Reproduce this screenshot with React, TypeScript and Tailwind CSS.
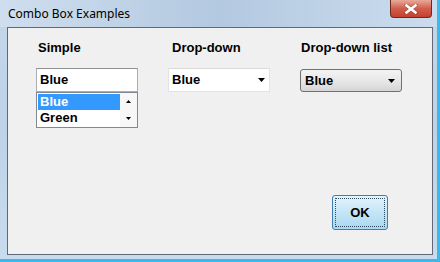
import React from "react";

const dlgFont = { fontFamily: '"Liberation Sans", Arial, sans-serif' };

function Arrow({ up = false, size = 7 }: { up?: boolean; size?: number }) {
  const h = Math.ceil(size / 2);
  return (
    <svg width={size} height={h} viewBox={`0 0 ${size} ${h}`}>
      {up ? (
        <polygon points={`0,${h} ${size},${h} ${size / 2},0`} fill="#000" />
      ) : (
        <polygon points={`0,0 ${size},0 ${size / 2},${h}`} fill="#000" />
      )}
    </svg>
  );
}

export default function App() {
  return (
    <div className="w-[440px] h-[262px] bg-[#3ab9ea] overflow-hidden" style={dlgFont}>
      <div className="w-[437px] h-[259px] flex flex-col bg-gradient-to-b from-[#c4d6ea] via-[#bed3e8] to-[#c9dbee] rounded-tr-[6px]">
        {/* title bar */}
        <div className="h-[27px] flex items-start bg-gradient-to-r from-[#cfdeee] via-[#b3c9e0] to-[#cbdcee]">
          <div
            className="pl-[8px] pt-[6px] text-[12px] leading-[16px] text-black"
            style={{ fontFamily: '"Noto Sans", "Open Sans", sans-serif' }}
          >
            Combo Box Examples
          </div>
          <div className="flex-1" />
          <div className="mr-[5px] w-[42px] h-[18px] rounded-b-[4px] border border-t-0 border-[#6d2a22] bg-gradient-to-b from-[#e9a99a] via-[#d05e4b] to-[#c5402d] flex items-center justify-center">
            <svg width="14" height="10" viewBox="0 0 14 10">
              <path d="M2 1 L12 9 M12 1 L2 9" stroke="#5a2a22" strokeWidth="4" strokeLinecap="round" opacity="0.35" />
              <path d="M2.5 1.5 L11.5 8.5 M11.5 1.5 L2.5 8.5" stroke="#fff" strokeWidth="2.6" strokeLinecap="square" />
            </svg>
          </div>
        </div>
        {/* client area */}
        <div className="ml-[7px] w-[426px] h-[228px] border border-[#5f6a76] bg-[#f0f0f0] flex flex-col">
          <div className="flex pl-[28px] pt-[12px] gap-[30px]">
            {/* Simple */}
            <div className="w-[102px] flex flex-col">
              <div className="pl-[2px] text-[13px] leading-[15px] font-bold text-black h-[15px]">Simple</div>
              <div className="mt-[13px] h-[24px] bg-white border border-[#abadb3] border-t-[#8e8f8f] flex items-center pl-[3px] text-[13px] font-bold text-black">
                Blue
              </div>
              <div className="h-[36px] bg-white border border-[#828790] flex">
                <div className="flex-1 flex flex-col pt-[1px] pl-[1px]">
                  <div className="h-[16px] bg-[#3399ff] text-white text-[13px] font-bold leading-[16px] pl-[2px]">Blue</div>
                  <div className="h-[16px] text-black text-[13px] font-bold leading-[16px] pl-[2px]">Green</div>
                </div>
                <div className="w-[17px] flex flex-col items-center justify-between py-[7px] bg-[#f7f7f7]">
                  <Arrow up size={5} />
                  <Arrow size={5} />
                </div>
              </div>
            </div>
            {/* Drop-down */}
            <div className="w-[102px] flex flex-col">
              <div className="pl-[4px] text-[13px] leading-[15px] font-bold text-black h-[15px]">Drop-down</div>
              <div className="mt-[13px] h-[24px] bg-white border border-[#e3e3e3] border-t-[#dadada] flex items-center pl-[3px] pr-[4px] text-[13px] font-bold text-black">
                <span className="flex-1">Blue</span>
                <Arrow size={7} />
              </div>
            </div>
            {/* Drop-down list */}
            <div className="w-[102px] flex flex-col">
              <div className="pl-[1px] text-[13px] leading-[15px] font-bold text-black h-[15px]">Drop-down list</div>
              <div className="mt-[14px] h-[23px] rounded-[3px] border border-[#707070] bg-gradient-to-b from-[#f3f3f3] via-[#e8e8e8] to-[#d6d6d6] flex items-center pl-[4px] pr-[6px] text-[13px] font-bold text-black">
                <span className="flex-1">Blue</span>
                <Arrow size={7} />
              </div>
            </div>
          </div>
          <div className="flex-1" />
          <div className="flex justify-end pr-[44px] pb-[24px]">
            <div className="w-[56px] h-[35px] rounded-[3px] border border-[#3c7fb1] bg-gradient-to-b from-[#e5f4fc] via-[#c4e5f6] to-[#a9d8f1] p-[2px]">
              <div className="w-full h-full border border-dotted border-[#2b4a60] rounded-[1px] flex items-center justify-center text-[13px] font-bold text-black">
                OK
              </div>
            </div>
          </div>
        </div>
      </div>
    </div>
  );
}
